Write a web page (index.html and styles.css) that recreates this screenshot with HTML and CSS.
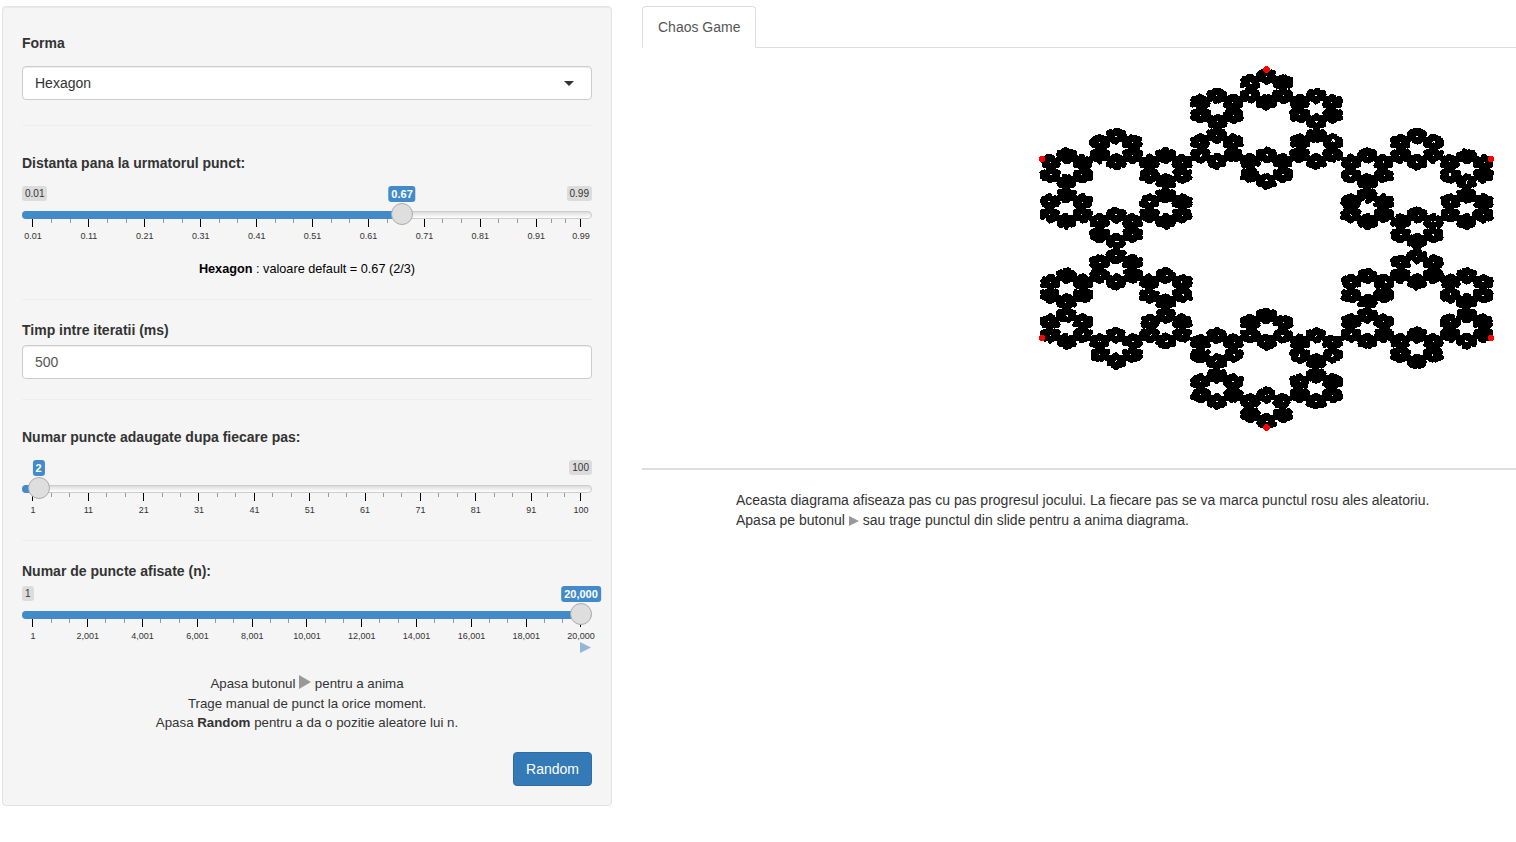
FILE: index.html
```html
<!DOCTYPE html>
<html lang="ro">
<head>
<meta charset="UTF-8">
<meta name="viewport" content="width=device-width, initial-scale=1.0">
<title>Chaos Game</title>
<link rel="stylesheet" href="styles.css">
</head>
<body>

<div class="well">
    <label class="label label-first">Forma</label>
    <div class="select-box">Hexagon<span class="caret"></span></div>
    <hr class="line line-wide">

    <label class="label label-tall">Distanta pana la urmatorul punct:</label>
    <div class="slider slider-gap" id="sliderDistanta"></div>
    <p class="note"><b>Hexagon</b> : valoare default = 0.67 (2/3)</p>
    <hr class="line">

    <label class="label">Timp intre iteratii (ms)</label>
    <div class="text-box">500</div>
    <hr class="line">

    <label class="label label-tall">Numar puncte adaugate dupa fiecare pas:</label>
    <div class="slider slider-gap" id="sliderPuncte"></div>
    <hr class="line line-wide">

    <label class="label">Numar de puncte afisate (n):</label>
    <div class="slider" id="sliderAfisate"></div>
    <div class="play-row">
        <svg class="play-small" viewBox="0 0 11 11"><path d="M0 0 L11 5.5 L0 11 Z"/></svg>
    </div>

    <div class="help">
        <p>Apasa butonul <svg class="play-grey" viewBox="0 0 12 14"><path d="M0 0 L12 7 L0 14 Z"/></svg> pentru a anima</p>
        <p>Trage manual de punct la orice moment.</p>
        <p>Apasa <b>Random</b> pentru a da o pozitie aleatore lui n.</p>
    </div>

    <div class="button-row">
        <button class="btn-random" type="button">Random</button>
    </div>
</div>

<div class="main">
    <ul class="tabs">
        <li class="tab">Chaos Game</li>
    </ul>
    <canvas id="plot" class="plot" width="874" height="420"></canvas>
    <hr class="plot-line">
    <div class="description">
        <p>Aceasta diagrama afiseaza pas cu pas progresul jocului. La fiecare pas se va marca punctul rosu ales aleatoriu.</p>
        <p>Apasa pe butonul <svg class="play-inline" viewBox="0 0 10 10"><path d="M0 0 L10 5 L0 10 Z"/></svg> sau trage punctul din slide pentru a anima diagrama.</p>
    </div>
</div>

<script src="app.js"></script>

</body>
</html>
```

FILE: styles.css
```css
* {
    box-sizing: border-box;
}

body {
    display: flex;
    align-items: flex-start;
    gap: 30px;
    margin: 0;
    padding: 6px 0 0 2px;
    font-family: "Liberation Sans", Arial, sans-serif;
    font-size: 14px;
    line-height: 20px;
    color: #333;
    background: #fff;
}

p {
    margin: 0;
}

/* sidebar */
.well {
    flex: 0 0 610px;
    padding: 19px;
    background: #f5f5f5;
    border: 1px solid #e3e3e3;
    border-radius: 4px;
    box-shadow: inset 0 1px 1px rgba(0, 0, 0, 0.05);
}

.label {
    display: block;
    margin-top: 20px;
    font-weight: bold;
}

.label-first {
    margin-top: 7px;
}

.label-tall {
    margin-top: 27px;
}

.line {
    height: 1px;
    margin: 20px 0 0;
    border: 0;
    background: #eee;
}

.line-wide {
    margin-top: 25px;
}

.select-box,
.text-box {
    position: relative;
    height: 34px;
    padding: 6px 12px;
    background: #fff;
    border: 1px solid #ccc;
    border-radius: 4px;
    box-shadow: inset 0 1px 1px rgba(0, 0, 0, 0.075);
    color: #555;
}

.select-box {
    margin-top: 13px;
    color: #333;
}

.text-box {
    margin-top: 5px;
}

.caret {
    position: absolute;
    top: 14px;
    right: 17px;
    border-style: solid;
    border-width: 5px 5px 0;
    border-color: #333 transparent transparent;
}

/* slider */
.slider {
    position: relative;
    height: 55px;
    margin-top: 5px;
}

.slider-gap {
    margin-top: 13px;
}

.slider-edge,
.slider-value {
    position: absolute;
    top: 0;
    padding: 1px 3px;
    border-radius: 3px;
    font-size: 10px;
    line-height: 13px;
    white-space: nowrap;
}

.slider-edge {
    color: #333;
    background: rgba(0, 0, 0, 0.1);
}

.slider-value {
    font-size: 11px;
    font-weight: bold;
    line-height: 14px;
    color: #fff;
    background: #428bca;
    transform: translateX(-50%);
}

.slider-min {
    left: 0;
}

.slider-max {
    right: 0;
}

.slider-track {
    position: absolute;
    top: 25px;
    left: 0;
    right: 0;
    height: 8px;
    background: linear-gradient(#ddd, #fff);
    border: 1px solid #ccc;
    border-radius: 8px;
}

.slider-bar {
    position: absolute;
    top: 25px;
    left: 0;
    height: 8px;
    background: #428bca;
    border-radius: 8px 0 0 8px;
}

.slider-handle {
    position: absolute;
    top: 17px;
    z-index: 1;
    width: 22px;
    height: 22px;
    background: #dedede;
    border: 1px solid #ababab;
    border-radius: 50%;
    transform: translateX(-50%);
}

.tick {
    position: absolute;
    top: 33px;
    width: 1px;
    height: 4px;
    background: #999;
}

.tick-major {
    height: 8px;
    background: #000;
}

.tick-text {
    position: absolute;
    top: 45px;
    font-size: 9px;
    line-height: 11px;
    color: #333;
    transform: translateX(-50%);
    white-space: nowrap;
}

.note {
    margin-top: 18px;
    font-size: 12.7px;
    text-align: center;
    color: #000;
}

.play-row {
    display: flex;
    justify-content: flex-end;
    height: 11px;
    margin-top: 1px;
}

.play-small {
    width: 11px;
    height: 11px;
    margin-right: 1px;
    fill: #337ab7;
    opacity: 0.5;
}

.help {
    margin-top: 21px;
    font-size: 13.3px;
    line-height: 19.5px;
    text-align: center;
}

.play-grey {
    width: 12px;
    height: 14px;
    vertical-align: -1px;
    fill: #999;
}

.button-row {
    display: flex;
    justify-content: flex-end;
    margin-top: 19px;
}

.btn-random {
    height: 34px;
    padding: 6px 12px;
    font: inherit;
    color: #fff;
    background: #337ab7;
    border: 1px solid #2e6da4;
    border-radius: 4px;
}

/* main panel */
.main {
    flex: 1;
}

.tabs {
    display: flex;
    margin: 0;
    padding: 0;
    list-style: none;
    border-bottom: 1px solid #ddd;
}

.tab {
    margin-bottom: -1px;
    padding: 10px 15px;
    color: #555;
    background: #fff;
    border: 1px solid #ddd;
    border-bottom-color: #fff;
    border-radius: 4px 4px 0 0;
}

.plot {
    display: block;
}

.plot-line {
    height: 2px;
    margin: 0;
    border: 0;
    background: #ddd;
}

.description {
    margin-top: 20px;
    padding-left: 94px;
}

.play-inline {
    width: 10px;
    height: 10px;
    vertical-align: -1px;
    fill: #999;
}
```

FILE: app.js
```js
var sliders = [
    { id: "sliderDistanta", min: 0.01, max: 0.99, step: 0.1, value: 0.67, decimals: 2 },
    { id: "sliderPuncte", min: 1, max: 100, step: 10, value: 2, decimals: 0 },
    { id: "sliderAfisate", min: 1, max: 20000, step: 2000, value: 20000, decimals: 0 }
];

var TRACK_START = 11; // centrul manerului la capatul stang
var TRACK_RANGE = 548;

function formatValue(v, decimals) {
    if (decimals > 0) return v.toFixed(decimals);
    return v.toLocaleString("en-US");
}

function addPart(parent, className, text) {
    var el = document.createElement("div");
    el.className = className;
    if (text !== undefined) el.textContent = text;
    parent.appendChild(el);
    return el;
}

function position(s, v) {
    return TRACK_START + TRACK_RANGE * (v - s.min) / (s.max - s.min);
}

function addTick(box, x, major) {
    var tick = addPart(box, major ? "tick tick-major" : "tick");
    tick.style.left = Math.round(x - 0.6) + "px";
}

function buildSlider(s) {
    var box = document.getElementById(s.id);
    var x = position(s, s.value);

    // eticheta de capat dispare cand valoarea ajunge peste ea
    if (x > 40) addPart(box, "slider-edge slider-min", formatValue(s.min, s.decimals));
    if (x < TRACK_RANGE - 20) addPart(box, "slider-edge slider-max", formatValue(s.max, s.decimals));

    addPart(box, "slider-value", formatValue(s.value, s.decimals)).style.left = x + "px";
    addPart(box, "slider-track");
    addPart(box, "slider-bar").style.width = x + "px";
    addPart(box, "slider-handle").style.left = x + "px";

    var majors = [];
    for (var v = s.min; v < s.max - s.step / 100; v += s.step) majors.push(v);
    majors.push(s.max);

    majors.forEach(function (m, i) {
        var mx = position(s, m);
        addTick(box, mx, true);
        addPart(box, "tick-text", formatValue(m, s.decimals)).style.left = mx + "px";
        if (i < majors.length - 1) {
            var gap = position(s, majors[i + 1]) - mx;
            addTick(box, mx + gap / 3, false);
            addTick(box, mx + gap * 2 / 3, false);
        }
    });
}

sliders.forEach(buildSlider);

// jocul haosului pe hexagon, cu raportul 0.67
function drawPlot() {
    var ctx = document.getElementById("plot").getContext("2d");
    var cx = 624.5, cy = 200;
    var rx = 224.5, ry = 179;
    var vertices = [[0, -1], [1, -0.5], [1, 0.5], [0, 1], [-1, 0.5], [-1, -0.5]];
    var ratio = 0.67;
    var seed = 12345;

    function nextIndex() {
        seed = (seed * 1103515245 + 12345) % 2147483648;
        return Math.floor(seed / 2147483648 * 6);
    }

    // disc fara antialiasing, ca punctele din grafic
    function stamp(x, y, radius) {
        for (var row = Math.ceil(y - radius); row <= Math.floor(y + radius); row++) {
            var half = Math.sqrt(radius * radius - (row - y) * (row - y));
            var left = Math.round(x - half);
            ctx.fillRect(left, row, Math.round(x + half) - left, 1);
        }
    }

    var px = 0, py = 0;
    ctx.fillStyle = "#000";
    for (var i = 0; i < 20000; i++) {
        var v = vertices[nextIndex()];
        px += (v[0] - px) * ratio;
        py += (v[1] - py) * ratio;
        if (i > 10) stamp(cx + px * rx, cy + py * ry, 2.6);
    }

    ctx.fillStyle = "#f00";
    vertices.forEach(function (v) {
        stamp(cx + v[0] * rx, cy + v[1] * ry, 3.4);
    });
}

drawPlot();
```
